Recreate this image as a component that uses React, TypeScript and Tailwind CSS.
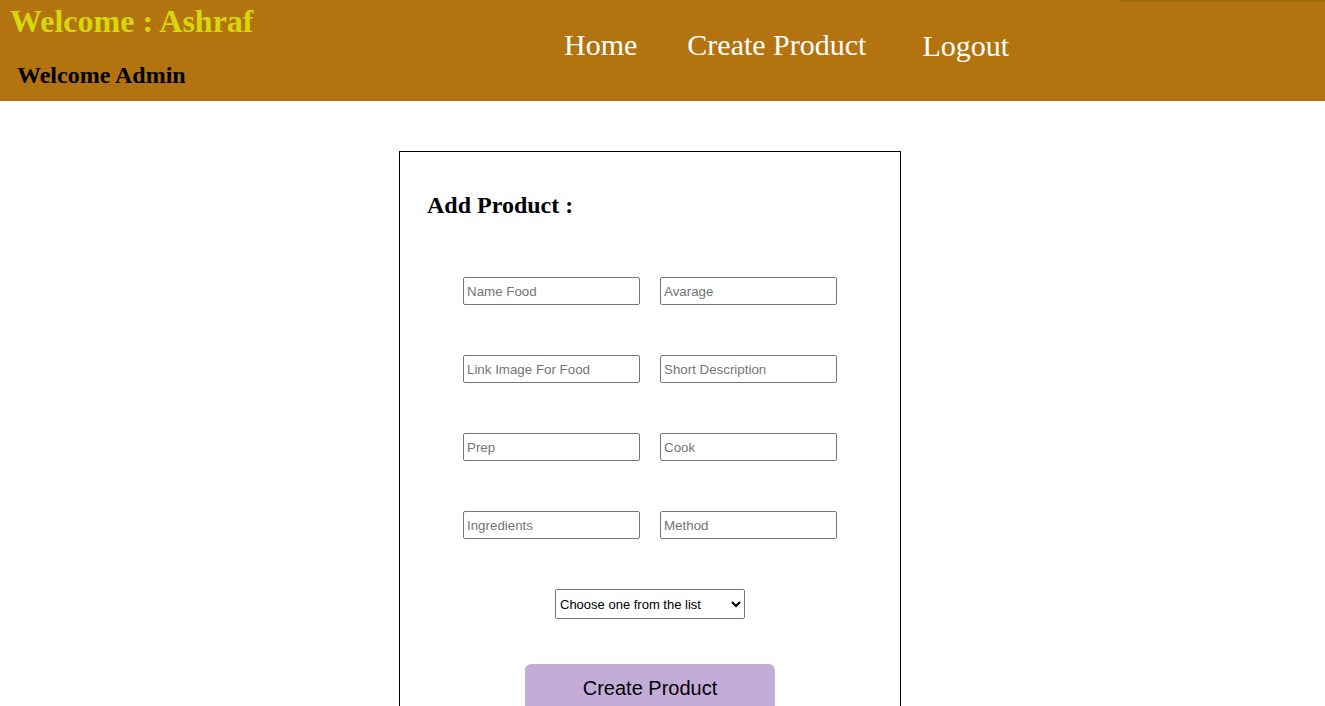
import React from "react";

const serif = "font-['Liberation_Serif','Times_New_Roman',serif]";
const sans = "font-['Liberation_Sans',Arial,sans-serif]";

function Field({ placeholder }: { placeholder: string }) {
  return (
    <input
      placeholder={placeholder}
      className={`${sans} w-[177px] h-[28px] border border-[#767676] rounded-[2px] pl-[3px] pr-[2px] text-[13.333px] text-black placeholder:text-[#757575] bg-white outline-none`}
    />
  );
}

export default function App() {
  return (
    <div className="min-h-[706px] bg-white relative overflow-hidden">
      <div className="absolute right-0 top-0 w-[205px] h-[3px] bg-gradient-to-b from-[#8a5a0c] to-transparent opacity-60 rounded-bl-[3px]" />
      <header className={`${serif} h-[101px] bg-[#b3730f] flex`}>
        <div className="w-[564px] shrink-0">
          <h1 className="text-[32px] leading-none font-bold text-[#d6d70c] mt-[5px] ml-[10px]">
            Welcome : Ashraf
          </h1>
          <h2 className="text-[24px] leading-none font-bold text-black mt-[26px] ml-[17px]">
            Welcome Admin
          </h2>
        </div>
        <nav className="flex items-start pt-[30px] text-[30px] leading-[30px] text-white">
          <a>Home</a>
          <a className="ml-[50px]">Create Product</a>
          <a className="ml-[56px] mt-px">Logout</a>
        </nav>
      </header>

      <main className="flex justify-center pt-[50px] pr-[25px]">
        <div className="w-[502px] border border-black pt-[41px] pb-[60px]">
          <h3 className={`${serif} text-[24px] leading-none font-bold text-black ml-[27px]`}>
            Add Product :
          </h3>
          <div className="mt-[60px] flex flex-col items-center gap-[50px]">
            <div className="flex gap-[20px]">
              <Field placeholder="Name Food" />
              <Field placeholder="Avarage" />
            </div>
            <div className="flex gap-[20px]">
              <Field placeholder="Link Image For Food" />
              <Field placeholder="Short Description" />
            </div>
            <div className="flex gap-[20px]">
              <Field placeholder="Prep" />
              <Field placeholder="Cook" />
            </div>
            <div className="flex gap-[20px]">
              <Field placeholder="Ingredients" />
              <Field placeholder="Method" />
            </div>
            <select
              className={`${sans} w-[190px] h-[30px] border border-[#767676] rounded-[2px] pl-0 text-[13px] text-black bg-white`}
              defaultValue=""
            >
              <option value="">Choose one from the list</option>
              <option value="a">Breakfast</option>
              <option value="b">Lunch</option>
              <option value="c">Dinner</option>
            </select>
          </div>
          <div className="flex justify-center mt-[45px]">
            <button
              className={`${sans} w-[250px] h-[48px] rounded-[6px] bg-[#c4acd9] text-[20px] text-black flex items-center justify-center`}
            >
              Create Product
            </button>
          </div>
        </div>
      </main>
    </div>
  );
}
